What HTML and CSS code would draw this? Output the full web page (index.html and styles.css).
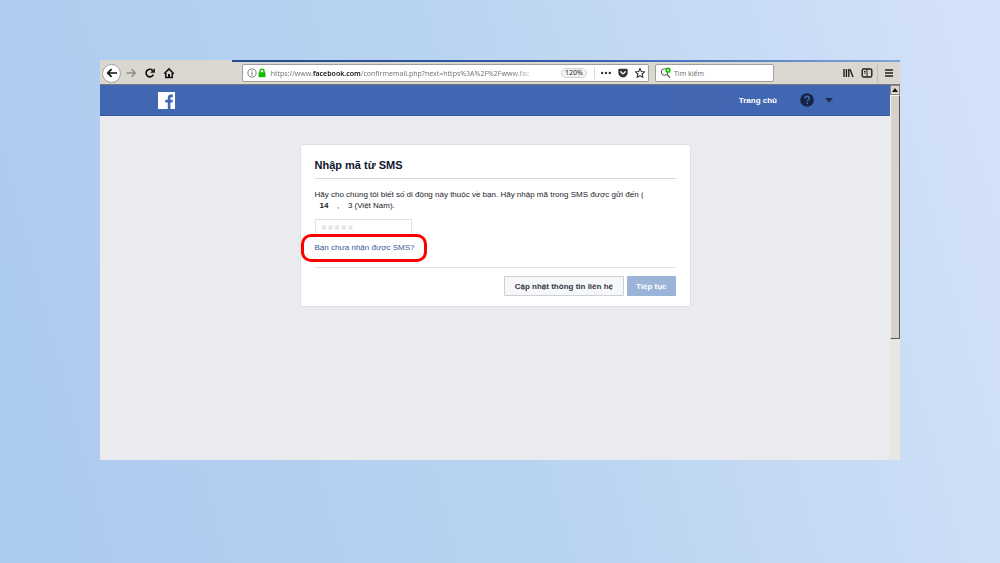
FILE: index.html
```html
<!DOCTYPE html>
<html lang="vi">
<head>
<meta charset="utf-8">
<title>Nhập mã từ SMS</title>
<link rel="stylesheet" href="styles.css">
</head>
<body>
<div class="window">
  <div class="titlebar"></div>
  <header class="toolbar">
    <nav class="nav" aria-label="Điều hướng">
      <button class="icon-button back" aria-label="Quay lại"><svg viewBox="0 0 12 12" width="12" height="12"><path d="M11 6H1.8M5.6 2.2 1.8 6l3.8 3.8" fill="none" stroke="#111" stroke-width="1.7"/></svg></button>
      <button class="icon-button" aria-label="Tiến"><svg viewBox="0 0 12 12" width="12" height="12"><path d="M1.5 6h8.7M6.6 2.3 10.2 6l-3.6 3.7" fill="none" stroke="#8a8a88" stroke-width="1.3"/></svg></button>
      <button class="icon-button" aria-label="Tải lại"><svg viewBox="0 0 12 12" width="12" height="12"><path d="M9.3 7.7A3.8 3.8 0 1 1 8.6 3.4" fill="none" stroke="#111" stroke-width="1.7"/><path d="M10.8 1.2v4.6H6.2z" fill="#111"/></svg></button>
      <button class="icon-button" aria-label="Trang đầu"><svg viewBox="0 0 12 12" width="12" height="12"><path d="M1.2 6.7 6 1.9l4.8 4.8M2.8 6v4.5h6.4V6" fill="none" stroke="#111" stroke-width="1.5"/><path d="M5 7h2v3.5H5z" fill="#111"/></svg></button>
    </nav>
    <div class="address">
      <svg viewBox="0 0 10 10" width="10" height="10"><circle cx="5" cy="5" r="4.1" fill="none" stroke="#777" stroke-width=".9"/><path d="M4.5 4.3h1v3.2h-1zM4.5 2.4h1v1.1h-1z" fill="#666"/></svg>
      <svg viewBox="0 0 8 10" width="8" height="10"><path d="M2 5V3.2a2 2 0 0 1 4 0V5" fill="none" stroke="#12bc00" stroke-width="1.4"/><rect x=".5" y="4.3" width="7" height="4.9" rx=".7" fill="#12bc00"/></svg>
      <span class="url">https://www.<b>facebook.com</b>/confirmemail.php?next=https%3A%2F%2Fwww.fac</span>
      <button class="zoom-level">120%</button>
      <span class="divider"></span>
      <button class="icon-button small" aria-label="Thao tác"><svg viewBox="0 0 12 12" width="12" height="12"><g fill="#333"><circle cx="2.2" cy="6" r="1.2"/><circle cx="6" cy="6" r="1.2"/><circle cx="9.8" cy="6" r="1.2"/></g></svg></button>
      <button class="icon-button small" aria-label="Pocket"><svg viewBox="0 0 12 12" width="12" height="12"><path d="M1.3 3q0-1.2 1.2-1.2h7q1.2 0 1.2 1.2v2.7a4.7 4.7 0 0 1-9.4 0z" fill="#333"/><path d="m3.7 4.7 2.3 2.2 2.3-2.2" fill="none" stroke="#fff" stroke-width="1.3" stroke-linecap="round"/></svg></button>
      <button class="icon-button small" aria-label="Đánh dấu"><svg viewBox="0 0 12 12" width="12" height="12"><path d="m6 1.5 1.3 3 3.3.3-2.5 2.2.8 3.4L6 8.7l-2.9 1.7.8-3.4L1.4 4.8l3.3-.3z" fill="none" stroke="#333" stroke-width="1.1" stroke-linejoin="round"/></svg></button>
    </div>
    <label class="search">
      <svg viewBox="0 0 12 12" width="12" height="12"><circle cx="4.6" cy="5" r="3.3" fill="none" stroke="#555"/><path d="m7 7.5 3 3" stroke="#555" stroke-width="1.3"/><circle cx="8" cy="3.2" r="2.6" fill="#12bc00"/><path d="M8 2v2.4M6.8 3.2h2.4" stroke="#fff" stroke-width=".8"/></svg>
      <input type="text" placeholder="Tìm kiếm" aria-label="Tìm kiếm">
    </label>
    <div class="tools">
      <button class="icon-button" aria-label="Thư viện"><svg viewBox="0 0 12 12" width="12" height="12"><path d="M2 2v8M4.4 2v8M6.8 2v8M8 2.3 11 10" fill="none" stroke="#222" stroke-width="1.4"/></svg></button>
      <button class="icon-button" aria-label="Thanh bên"><svg viewBox="0 0 12 12" width="12" height="12"><rect x="1.2" y="2" width="9.6" height="8" rx="1.6" fill="none" stroke="#222" stroke-width="1.4"/><path d="M6 2v8M3 4.5h1.6M3 6h1.6" stroke="#222" stroke-width="1"/></svg></button>
      <span class="divider tall"></span>
      <button class="icon-button" aria-label="Menu"><svg viewBox="0 0 12 12" width="12" height="12"><path d="M2 3h8M2 6h8M2 9h8" stroke="#222" stroke-width="1.3"/></svg></button>
    </div>
  </header>
  <div class="viewport">
    <div class="page">
      <div class="site-bar">
        <a class="logo" href="#" aria-label="Facebook"><svg viewBox="0 0 17 17" width="17" height="17"><rect width="17" height="17" fill="#fff"/><path d="M9.8 17v-6.5H7.3V7.7h2.5V5.9c0-2.1 1.2-3.3 3.3-3.3h1.8v2.6h-1.3c-.9 0-1.2.4-1.2 1.2v1.3h2.5l-.4 2.8h-2.1V17z" fill="#4267b2"/></svg></a>
        <span class="profile"></span>
        <a class="home" href="#">Trang chủ</a>
        <button class="icon-button help" aria-label="Trợ giúp"><svg viewBox="0 0 14 14" width="14" height="14"><circle cx="7" cy="7" r="6.8" fill="#172442"/><path d="M4.9 5.5c0-1.4.9-2.1 2.2-2.1s2.1.8 2.1 1.9c0 1.5-2 1.5-2 3" fill="none" stroke="#4267b2" stroke-width="1.6"/><rect x="6.3" y="9.4" width="1.7" height="1.6" fill="#4267b2"/></svg></button>
        <button class="icon-button" aria-label="Tài khoản"><svg viewBox="0 0 10 6" width="10" height="6"><path d="M1 1h8L5 5.5z" fill="#1b2a4d"/></svg></button>
      </div>
      <main class="content">
        <form class="card">
          <h1>Nhập mã từ SMS</h1>
          <p>Hãy cho chúng tôi biết số di động này thuộc về bạn. Hãy nhập mã trong SMS được gửi đến <span class="cut">(</span><br><span class="masked"><b>14</b><i>,</i><i>3</i></span>(Việt Nam).</p>
          <input class="code" type="text" placeholder="# # # # #" aria-label="Mã xác nhận">
          <div class="resend"><a href="#">Bạn chưa nhận được SMS?</a></div>
          <div class="actions">
            <button type="button" class="button">Cập nhật thông tin liên hệ</button>
            <button type="button" class="button primary">Tiếp tục</button>
          </div>
        </form>
      </main>
    </div>
    <div class="scrollbar">
      <button class="scroll-up" aria-label="Cuộn lên"><svg viewBox="0 0 6 4" width="6" height="4"><path d="M0 4h6L3 0z" fill="#111"/></svg></button>
      <div class="thumb"></div>
    </div>
  </div>
</div>
</body>
</html>
```
FILE: styles.css
```css
*, *::before { box-sizing: border-box; }

body {
  margin: 0;
  min-height: 100vh;
  padding: 60px 10%;
  background: linear-gradient(75deg, #abcaf0 0%, #b9d4f1 50%, #d5e2f9 100%);
  font-family: "Liberation Sans", Arial, sans-serif;
  font-size: 8px;
  line-height: 11px;
  color: #1d2129;
}

button, input { font: inherit; color: inherit; }
a { text-decoration: none; }
svg { display: block; flex: none; }

.window { display: flex; flex-direction: column; min-height: 400px; }

.titlebar {
  height: 2px;
  background: linear-gradient(90deg, #dad7d0 0 132px, #264a8c 132px, #345fae 60%, #7fa6dc);
}

/* Browser toolbar */
.toolbar {
  display: flex;
  align-items: center;
  height: 23px;
  padding: 0 2px;
  background: #dad7d0;
  border-bottom: 1px solid #77777b;
  font-family: "Noto Sans", sans-serif;
  font-size: 7px;
}

.nav { display: flex; align-items: center; flex: none; margin-right: 8%; }

.icon-button {
  display: grid;
  place-items: center;
  width: 19px;
  height: 19px;
  padding: 0;
  border: 0;
  background: none;
}
.icon-button.back { background: #fff; border: 1px solid #a6a39e; border-radius: 50%; }
.icon-button.small { width: 16px; height: 16px; }

.address {
  display: flex;
  align-items: center;
  flex: 1;
  min-width: 0;
  height: 18px;
  padding: 0 0 0 4px;
  gap: 1px;
  background: #fff;
  border: 1px solid #a19ea0;
  border-radius: 2px;
}

.url {
  flex: 1;
  min-width: 0;
  margin-left: 4px;
  overflow: hidden;
  white-space: nowrap;
  color: #777;
  -webkit-mask-image: linear-gradient(90deg, #000 240px, transparent 272px);
  mask-image: linear-gradient(90deg, #000 240px, transparent 272px);
}
.url b { color: #111; font-weight: 600; }

.zoom-level {
  flex: none;
  width: 26px;
  height: 10px;
  padding: 0;
  border: 1px solid #d4d4d4;
  border-radius: 5px;
  background: #f1f1f1;
  color: #222;
  line-height: 8px;
}

.divider { width: 1px; height: 12px; margin: 0 2px 0 6px; background: #d8d8d8; }
.divider.tall { height: 20px; margin: 0 1px; background: #c3c0ba; }

.search {
  display: flex;
  align-items: center;
  gap: 2px;
  width: 15%;
  height: 18px;
  margin: 0 8% 0 6px;
  padding: 0 4px;
  background: #fff;
  border: 1px solid #a19ea0;
  border-radius: 2px;
}
.search input { flex: 1; min-width: 0; padding: 0; border: 0; background: none; outline: 0; }
.search input::placeholder { color: #777; opacity: 1; }

.tools { display: flex; align-items: center; flex: none; }

/* Web page */
.viewport { display: flex; flex: 1; background: #e9ebee; }
.page { flex: 1; min-width: 0; }

.site-bar {
  display: flex;
  align-items: center;
  height: 31px;
  padding: 0 52px 0 58px;
  background: #4267b2;
  border-bottom: 1px solid #3a52a0;
}
.logo { margin-right: auto; }
.profile { width: 56px; height: 18px; margin-right: 8px; border-radius: 6px; background: #4566b1; }
.home { color: #fff; font-weight: bold; }
.help { margin: 0 3px 0 20px; }

.content { padding: 28px 14px; }

.card {
  max-width: 391px;
  margin: 0 auto;
  padding: 13px 14px 10px;
  background: #fff;
  border: 1px solid #dddfe2;
  border-radius: 3px;
}

h1 {
  margin: 0 0 10px;
  padding-bottom: 6px;
  border-bottom: 1px solid #d5d8dc;
  font-size: 11px;
  line-height: 14px;
  color: #10152e;
}

p { margin: 0 0 8px; }

.cut { display: inline-block; width: 2px; overflow: hidden; vertical-align: top; }

.masked { display: inline-flex; justify-content: space-between; width: 40px; padding: 0 2px 0 5px; vertical-align: top; }
.masked i { font-style: normal; }

.code {
  display: block;
  width: 97px;
  height: 16px;
  padding: 0 6px;
  border: 1px solid #dfe1e4;
  border-bottom: 0;
  background: #fff;
  outline: 0;
}
.code::placeholder { color: #cfcfd3; opacity: 1; }

.resend {
  position: relative;
  padding: 7px 0 14px;
  border-bottom: 1px solid #dfe1e4;
}
.resend a { color: #385898; }

/* Highlight ring drawn over the link */
.resend::before {
  content: "";
  position: absolute;
  top: -1px;
  left: -14px;
  width: 126px;
  height: 28px;
  border: 3px solid #f00;
  border-radius: 10px;
  pointer-events: none;
}

.actions { display: flex; justify-content: flex-end; gap: 3px; padding-top: 8px; }

.button {
  height: 20px;
  padding: 0 10px;
  border: 1px solid #ced0d4;
  border-radius: 1px;
  background: #f6f7f9;
  color: #33373f;
  font-weight: bold;
}
.button.primary { padding: 0 8px; border-color: #9cb4d8; background: #9cb4d8; color: #fff; }

/* Scrollbar */
.scrollbar { display: flex; flex-direction: column; width: 10px; background: #e7e7e3; }
.scroll-up {
  display: grid;
  place-items: center;
  height: 10px;
  padding: 0;
  border: 1px solid #8b8984;
  background: #dad7d0;
}
.thumb {
  height: 65%;
  border: 1px solid #f5f3ee;
  border-right: 1px solid #5b5955;
  border-bottom: 1px solid #5b5955;
  background: #d5d2cb;
}
```
